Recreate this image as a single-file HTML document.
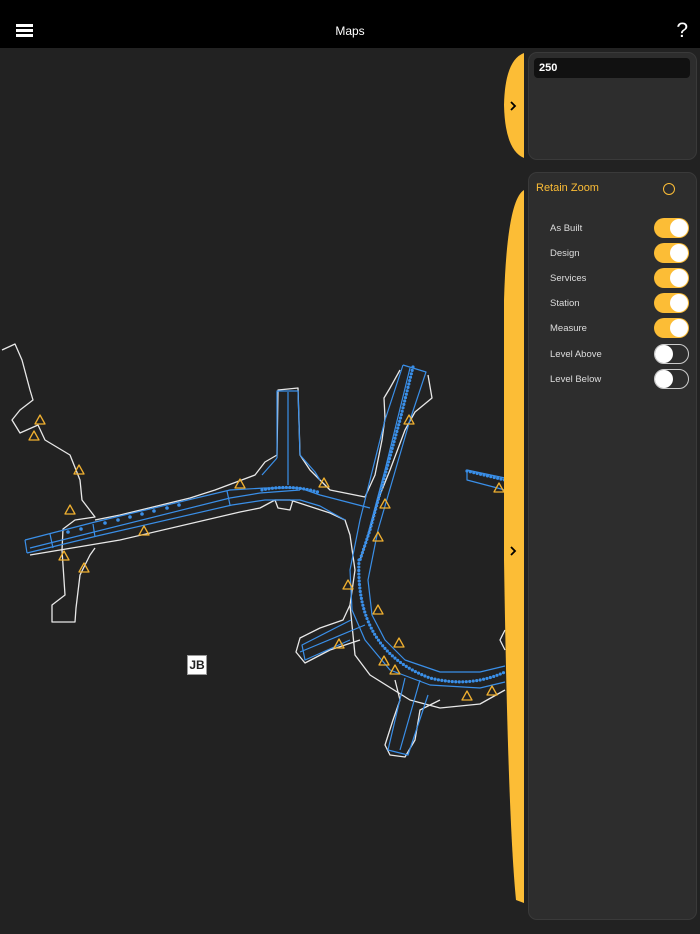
<!DOCTYPE html>
<html><head><meta charset="utf-8"><style>
*{margin:0;padding:0;box-sizing:border-box}
body{width:700px;height:934px;background:#222;position:relative;overflow:hidden;font-family:"Liberation Sans",sans-serif}
.top{position:absolute;left:0;top:0;width:700px;height:48px;background:#000}
.title{position:absolute;top:24px;left:0;width:700px;text-align:center;color:#fff;font-size:12px}
.panel{position:absolute;left:528px;width:169px;background:#2d2d2d;border:1.5px solid #3a3a3a;border-radius:9px}
.row{position:absolute;left:21px;color:#ddd;font-size:9.5px}
.tg{position:absolute;left:125px;width:35px;height:20px;border-radius:10px}
.tg.on{background:#fcbd36}
.tg.off{background:#2d2d2d;border:1.2px solid #ccc}
.tg i{position:absolute;top:1px;width:18px;height:18px;border-radius:50%;background:#fff}
.on i{right:1px}.off i{left:0;top:0}
</style></head><body>
<svg width="700" height="934" style="position:absolute;left:0;top:0">
<g fill="none" stroke-linejoin="round">
<g stroke="#e8e8e8" stroke-width="1.3">
<path d="M2,350 L15,344 L22,360 L30,390 L33,400 L20,410 L12,420 L20,433 L38,425 L45,440 L70,455 L80,480 L82,500 L95,517 L75,520 L63,529 L62,550 L65,595 L52,605 L52,622 L75,622 L76,608 L80,575 L90,555 L95,548"/>
<path d="M30,555 L60,550 L120,540 L240,512 L260,508 L275,500 L290,500 L330,513 L345,520 L350,535 L355,570 L350,605 L355,655 L370,675 L410,700 L440,708 L480,704 L505,690"/>
<path d="M95,520 L120,515 L190,498 L215,490 L255,475 L265,462 L277,455 L278,390 L298,388 L300,455 L310,470 L330,490 L365,497 L375,475 L382,440 L385,418 L384,398 L390,388 L400,370 M428,375 L432,398 L415,412 L405,430 L390,470 L378,500 L370,530 L360,560"/>
<path d="M275,500 L278,508 L290,510 L293,500"/>
<path d="M350,605 L343,620 L320,628 L300,638 L296,652 L305,663 L330,650 L360,640"/>
<path d="M395,680 L400,700 L393,720 L385,745 L390,755 L405,757 L415,740 L420,710 L440,700"/>
<path d="M505,630 L500,640 L505,650"/>
</g>
<g stroke="#3a8fe8" stroke-width="1.2">
<path d="M25,540 L95,522 L230,490 L265,488 L300,488 L320,495 L370,508"/>
<path d="M27,553 L97,536 L232,505 L265,500 L300,500 L320,506 L345,520"/>
<path d="M25,540 L27,553 M50,534 L53,548 M93,524 L95,537 M227,491 L230,505"/>
<path d="M30,548 L230,498 L260,493 L300,490"/>
<path d="M277,458 L277,391 L298,391 L300,455 L315,472 L320,480 M277,458 L262,475 M288,392 L288,485"/>
<path d="M403,365 L426,372 L410,420 L378,530 L368,580 L372,615 L385,640 L405,660 L440,672 L480,672 L505,666"/>
<path d="M403,365 L385,420 L360,520 L350,570 L352,610 L365,640 L390,670 L430,685 L480,688 L505,682"/>
<path d="M410,368 L385,470 L365,545"/>
<path d="M351,620 L302,645 L305,660 L350,640 M300,652 L365,625"/>
<path d="M405,678 L388,750 L408,755 L428,695 M400,750 L420,680"/>
<path d="M505,478 L467,470 L467,480 L505,490"/>
</g>
<g fill="#3a8fe8" stroke="none">
<circle cx="68" cy="532" r="1.8"/><circle cx="81" cy="529" r="1.8"/><circle cx="105" cy="523" r="1.8"/><circle cx="118" cy="520" r="1.8"/><circle cx="130" cy="517" r="1.8"/><circle cx="142" cy="514" r="1.8"/><circle cx="154" cy="511" r="1.8"/><circle cx="167" cy="508" r="1.8"/><circle cx="179" cy="505" r="1.8"/>
</g>
<g stroke="#3a8fe8" stroke-width="3.2" stroke-dasharray="0 3.5" stroke-linecap="round">
<path d="M262,490 Q290,484 318,492"/>
<path d="M413,367 L400,420 L370,530 L360,560"/>
<path d="M359,560 Q355,650 430,678 Q470,688 505,672"/>
<path d="M467,471 L505,480"/>
</g>
<g stroke="#f0b030" stroke-width="1.3">
<path id="t" d="M0,-5 L5,4 L-5,4 Z" transform="translate(40,420)"/>
<use href="#t" x="-6" y="16"/><use href="#t" x="39" y="50"/><use href="#t" x="30" y="90"/><use href="#t" x="24" y="136"/><use href="#t" x="44" y="148"/><use href="#t" x="104" y="111"/><use href="#t" x="200" y="64"/><use href="#t" x="284" y="63"/><use href="#t" x="369" y="0"/><use href="#t" x="345" y="84"/><use href="#t" x="338" y="117"/><use href="#t" x="308" y="165"/><use href="#t" x="338" y="190"/><use href="#t" x="359" y="223"/><use href="#t" x="299" y="224"/><use href="#t" x="344" y="241"/><use href="#t" x="355" y="250"/><use href="#t" x="427" y="276"/><use href="#t" x="452" y="271"/><use href="#t" x="459" y="68"/>
</g>
</g>
<path d="M524,53 L524,158 Q505,150 504,105 Q505,60 524,53 Z" fill="#fcbd36"/>
<path d="M524,190 Q507,200 504,300 L504,560 Q508,820 516,900 L524,903 Z" fill="#fcbd36"/>
<path d="M511,102 L515,106 L511,110" stroke="#000" stroke-width="1.8" fill="none"/>
<path d="M511,547 L515,551 L511,555" stroke="#000" stroke-width="1.8" fill="none"/>
</svg>
<div style="position:absolute;left:187px;top:655px;width:20px;height:20px;background:#fff;border:1px solid #999;font-size:12px;font-weight:bold;color:#222;text-align:center;line-height:19px">JB</div>
<div class="top"></div>
<div style="position:absolute;left:16px;top:24px;width:17px;height:3px;background:#fff;box-shadow:0 5px #fff,0 10px #fff"></div>
<div class="title">Maps</div>
<div style="position:absolute;right:12px;top:19px;color:#fff;font-size:21px">?</div>
<div class="panel" style="top:52px;height:108px">
<div style="position:absolute;left:5px;top:5px;width:156px;height:20px;background:#111;border-radius:4px;color:#fff;font-size:11px;font-weight:bold;padding:4px 5px">250</div>
</div>
<div class="panel" style="top:172px;height:748px">
<div style="position:absolute;left:7px;top:9px;color:#fcbd36;font-size:11px">Retain Zoom</div>
<div style="position:absolute;left:134px;top:10px;width:12px;height:12px;border:1.5px solid #fcbd36;border-radius:50%"></div>
<div class="row" style="top:50px">As Built</div><div class="tg on" style="top:45px"><i></i></div>
<div class="row" style="top:75px">Design</div><div class="tg on" style="top:70px"><i></i></div>
<div class="row" style="top:100px">Services</div><div class="tg on" style="top:95px"><i></i></div>
<div class="row" style="top:125px">Station</div><div class="tg on" style="top:120px"><i></i></div>
<div class="row" style="top:150px">Measure</div><div class="tg on" style="top:145px"><i></i></div>
<div class="row" style="top:176px">Level Above</div><div class="tg off" style="top:171px"><i></i></div>
<div class="row" style="top:201px">Level Below</div><div class="tg off" style="top:196px"><i></i></div>
</div>
</body></html>
